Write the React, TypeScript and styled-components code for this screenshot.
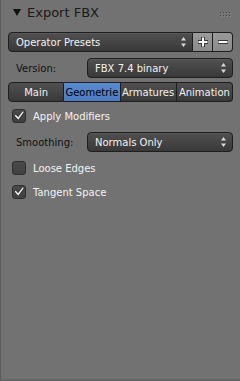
import styled, { createGlobalStyle } from "styled-components";

const GlobalStyle = createGlobalStyle`
  html, body {
    margin: 0;
    padding: 0;
    background: #727272;
  }
  * {
    box-sizing: border-box;
  }
`;

const TABS = ["Main", "Geometrie", "Armatures", "Animation"];

const Updown = () => (
  <svg width="7" height="12" viewBox="0 0 7 12">
    <path d="M3.5 1 L6 4.5 L1 4.5 Z" fill="#d8d8d8" />
    <path d="M3.5 11 L6 7.5 L1 7.5 Z" fill="#d8d8d8" />
  </svg>
);

const Check = () => (
  <svg width="14" height="14" viewBox="0 0 14 14">
    <path
      d="M3 6.5 L6 10 L11.5 2.5"
      fill="none"
      stroke="#2a2a2a"
      strokeWidth="3.4"
      strokeLinecap="round"
      strokeLinejoin="round"
    />
    <path
      d="M3 6.5 L6 10 L11.5 2.5"
      fill="none"
      stroke="#f0f0f0"
      strokeWidth="1.8"
      strokeLinecap="round"
      strokeLinejoin="round"
    />
  </svg>
);

export default function App() {
  return (
    <>
      <GlobalStyle />
      <Panel>
        <Header>
          <Triangle />
          <HeaderTitle>Export FBX</HeaderTitle>
          <Grip>
            {Array.from({ length: 8 }).map((_, i) => (
              <Dot key={i} />
            ))}
          </Grip>
        </Header>
        <Content>
          <Row $top={7}>
            <Menu $joinRight>
              <span>Operator Presets</span>
              <Updown />
            </Menu>
            <IconButton>
              <svg width="14" height="14" viewBox="0 0 14 14">
                <path d="M7 2 V12 M2 7 H12" stroke="#3a3a3a" strokeWidth="4" />
                <path d="M7 2.5 V11.5 M2.5 7 H11.5" stroke="#fafafa" strokeWidth="2" />
              </svg>
            </IconButton>
            <IconButton $last>
              <svg width="14" height="14" viewBox="0 0 14 14">
                <path d="M2 7 H12" stroke="#3a3a3a" strokeWidth="4" />
                <path d="M2.5 7 H11.5" stroke="#fafafa" strokeWidth="2" />
              </svg>
            </IconButton>
          </Row>
          <Row $top={6}>
            <Label>Version:</Label>
            <Menu>
              <span>FBX 7.4 binary</span>
              <Updown />
            </Menu>
          </Row>
          <Row $top={4}>
            <Tabs>
              {TABS.map((t, i) => (
                <Tab key={t} $active={i === 1} $first={i === 0} $last={i === TABS.length - 1}>
                  {t}
                </Tab>
              ))}
            </Tabs>
          </Row>
          <Row $top={4}>
            <CheckRow>
              <Box>
                <Check />
              </Box>
              <CheckLabel>Apply Modifiers</CheckLabel>
            </CheckRow>
          </Row>
          <Row $top={6}>
            <Label>Smoothing:</Label>
            <Menu>
              <span>Normals Only</span>
              <Updown />
            </Menu>
          </Row>
          <Row $top={6}>
            <CheckRow>
              <Box />
              <CheckLabel>Loose Edges</CheckLabel>
            </CheckRow>
          </Row>
          <Row $top={4}>
            <CheckRow>
              <Box>
                <Check />
              </Box>
              <CheckLabel>Tangent Space</CheckLabel>
            </CheckRow>
          </Row>
        </Content>
      </Panel>
    </>
  );
}

const Panel = styled.div`
  width: 240px;
  height: 381px;
  background: #727272;
  border-left: 1px solid #5e5e5e;
  border-bottom: 2px solid #656565;
  font-family: "DejaVu Sans", sans-serif;
  font-size: 10px;
  display: flex;
  flex-direction: column;
`;

const Header = styled.div`
  height: 25px;
  display: flex;
  align-items: center;
  padding: 0 10px 0 12px;
`;

const Triangle = styled.div`
  width: 0;
  height: 0;
  border-left: 4px solid transparent;
  border-right: 4px solid transparent;
  border-top: 7px solid #111;
  margin-right: 6px;
`;

const HeaderTitle = styled.div`
  flex: 1;
  font-size: 13px;
  color: #1a1a1a;
`;

const Grip = styled.div`
  display: grid;
  grid-template-columns: repeat(4, 1px);
  column-gap: 2px;
  row-gap: 2px;
  margin-top: 2px;
`;

const Dot = styled.div`
  width: 1px;
  height: 1px;
  background: #4a4a4a;
  box-shadow: 1px 1px 0 #8a8a8a;
`;

const Content = styled.div`
  display: flex;
  flex-direction: column;
  padding: 0 7px 0 7px;
`;

const Row = styled.div<{ $top: number }>`
  height: 20px;
  margin-top: ${(p) => p.$top}px;
  display: flex;
  align-items: center;
`;

const Menu = styled.div<{ $joinRight?: boolean }>`
  flex: 1;
  height: 20px;
  display: flex;
  align-items: center;
  justify-content: space-between;
  padding: 0 5px 0 7px;
  color: #f2f2f2;
  background: linear-gradient(#505050, #393939);
  border: 1px solid #1e1e1e;
  border-radius: ${(p) => (p.$joinRight ? "4px 0 0 4px" : "4px")};
  box-shadow: inset 0 1px 0 rgba(255, 255, 255, 0.06);
  white-space: nowrap;
`;

const IconButton = styled.div<{ $last?: boolean }>`
  width: 20px;
  height: 20px;
  display: flex;
  align-items: center;
  justify-content: center;
  background: linear-gradient(#9a9a9a, #8a8a8a);
  border: 1px solid #1e1e1e;
  border-left: none;
  border-radius: ${(p) => (p.$last ? "0 4px 4px 0" : "0")};
`;

const Label = styled.div`
  width: 79px;
  padding-left: 8px;
  color: #111;
`;

const Tabs = styled.div`
  flex: 1;
  display: grid;
  grid-template-columns: repeat(4, 1fr);
  height: 20px;
`;

const Tab = styled.div<{ $active?: boolean; $first?: boolean; $last?: boolean }>`
  display: flex;
  align-items: center;
  justify-content: center;
  overflow: hidden;
  white-space: nowrap;
  color: ${(p) => (p.$active ? "#000" : "#f2f2f2")};
  background: ${(p) =>
    p.$active ? "linear-gradient(#5a8ad0, #4d7cc2)" : "linear-gradient(#505050, #393939)"};
  border: 1px solid #1e1e1e;
  border-left: ${(p) => (p.$first ? "1px solid #1e1e1e" : "none")};
  border-radius: ${(p) => (p.$first ? "4px 0 0 4px" : p.$last ? "0 4px 4px 0" : "0")};
`;

const CheckRow = styled.div`
  display: flex;
  align-items: center;
  padding-left: 4px;
`;

const Box = styled.div`
  width: 14px;
  height: 14px;
  border-radius: 3px;
  background: linear-gradient(#4a4a4a, #404040);
  border: 1px solid #2e2e2e;
  display: flex;
  align-items: center;
  justify-content: center;
  margin-right: 7px;
`;

const CheckLabel = styled.div`
  color: #f2f2f2;
`;
